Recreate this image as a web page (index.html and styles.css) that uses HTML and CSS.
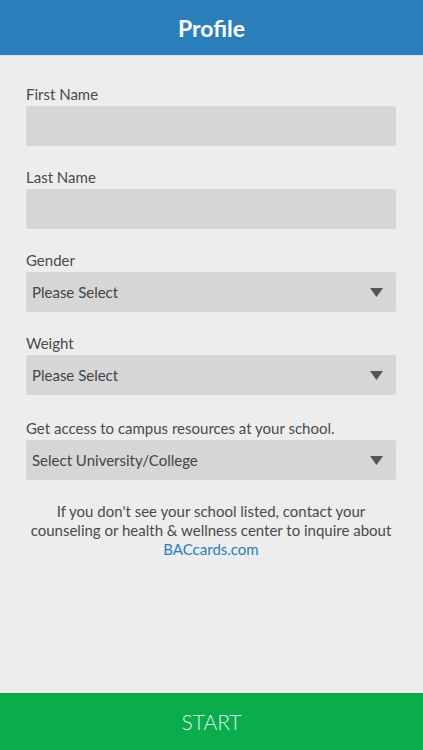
FILE: index.html
```html
<!DOCTYPE html>
<html lang="en">
<head>
<meta charset="utf-8">
<title>Profile</title>
<link rel="stylesheet" href="styles.css">
</head>
<body>
<div class="app">
  <header class="topbar"><h1 class="title">Profile</h1></header>
  <main class="form">
    <div class="field">
      <label class="label">First Name</label>
      <div class="input"></div>
    </div>
    <div class="field">
      <label class="label">Last Name</label>
      <div class="input"></div>
    </div>
    <div class="field">
      <label class="label">Gender</label>
      <div class="input select"><span>Please Select</span><svg class="caret" width="13" height="9" viewBox="0 0 13 9"><path d="M0 0H13L6.5 9Z" fill="#555"/></svg></div>
    </div>
    <div class="field">
      <label class="label">Weight</label>
      <div class="input select"><span>Please Select</span><svg class="caret" width="13" height="9" viewBox="0 0 13 9"><path d="M0 0H13L6.5 9Z" fill="#555"/></svg></div>
    </div>
    <div class="field field-school">
      <label class="label">Get access to campus resources at your school.</label>
      <div class="input select"><span>Select University/College</span><svg class="caret" width="13" height="9" viewBox="0 0 13 9"><path d="M0 0H13L6.5 9Z" fill="#555"/></svg></div>
    </div>
    <p class="note">If you don't see your school listed, contact your counseling or health &amp; wellness center to inquire about <a class="link" href="#">BACcards.com</a></p>
  </main>
  <footer class="start">START</footer>
</div>
</body>
</html>
```
FILE: styles.css
```css
html, body {
  margin: 0;
  padding: 0;
}
body {
  font-family: Lato, "Open Sans", sans-serif;
  background: #ededed;
}
.app {
  width: 423px;
  height: 750px;
  display: flex;
  flex-direction: column;
}
.topbar {
  height: 55px;
  background: #2a7fbb;
  border-bottom: 1px solid #d5e1ea;
  display: flex;
  align-items: center;
  justify-content: center;
  flex-shrink: 0;
}
.title {
  margin: 0;
  color: #fff;
  font-size: 23px;
  font-weight: 700;
}
.form {
  flex: 1;
  padding: 28px 27px 0 26px;
  display: flex;
  flex-direction: column;
}
.field {
  display: flex;
  flex-direction: column;
  margin-bottom: 21px;
}
.field-school {
  margin-top: 2px;
}
.label {
  font-size: 15px;
  line-height: 21px;
  color: #4a4a4a;
  margin-bottom: 1px;
}
.input {
  height: 40px;
  background: #d6d6d6;
  border-radius: 3px;
}
.select {
  display: flex;
  align-items: center;
  justify-content: space-between;
  padding: 0 13px 0 6px;
  font-size: 15px;
  color: #444;
}
.note {
  margin: 1px 0 0;
  text-align: center;
  font-size: 15px;
  line-height: 19px;
  color: #4a4a4a;
}
.link {
  color: #2a7fbb;
  text-decoration: none;
}
.start {
  height: 57px;
  flex-shrink: 0;
  background: #09ad4b;
  color: #dff5e6;
  font-size: 21px;
  font-weight: 300;
  display: flex;
  align-items: center;
  justify-content: center;
}
```
